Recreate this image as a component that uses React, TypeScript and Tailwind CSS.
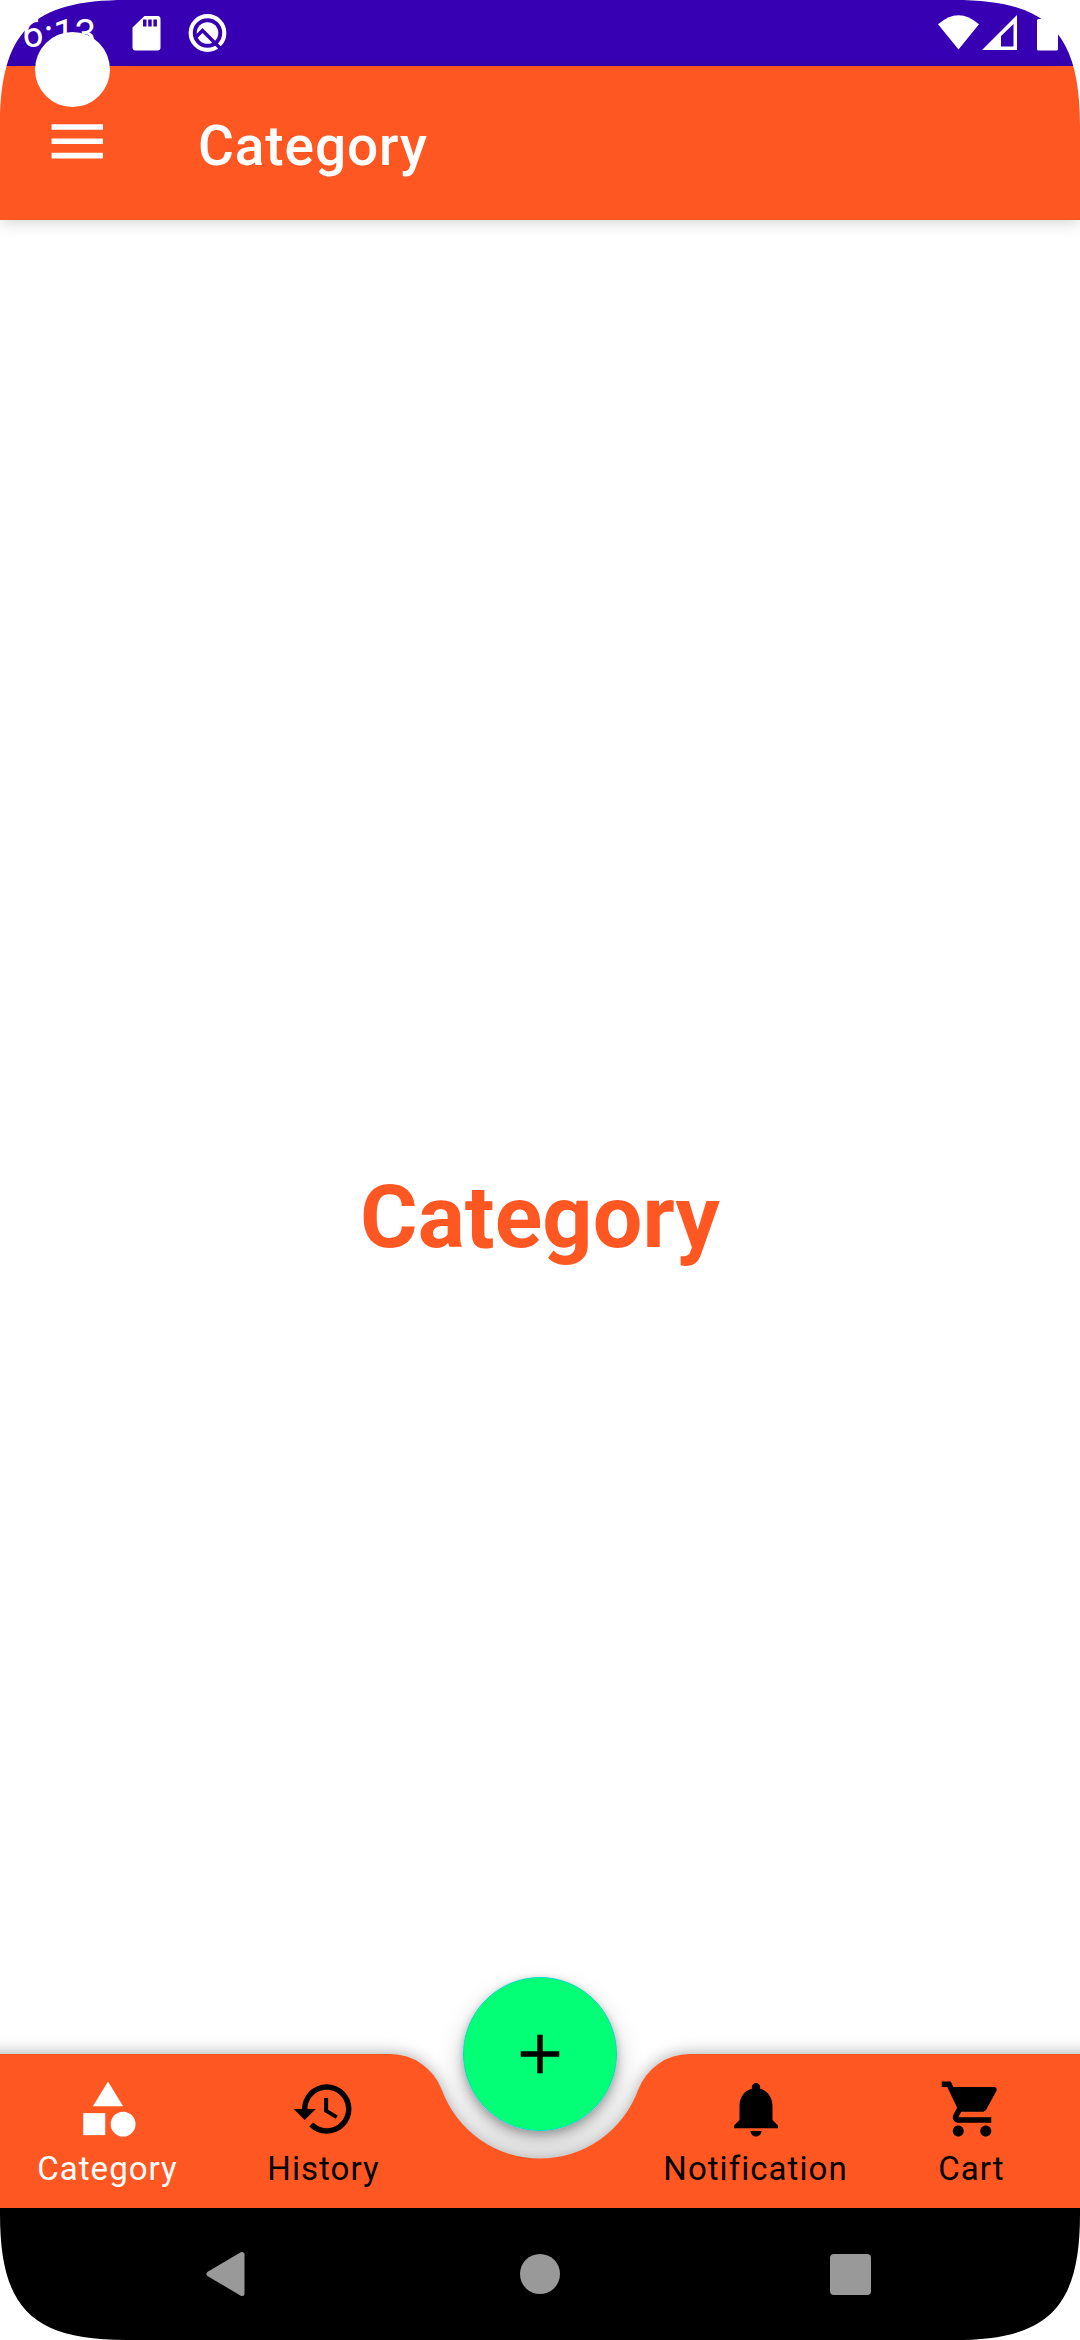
import { MdAdd, MdCategory, MdHistory, MdMenu, MdNotifications, MdShoppingCart } from "react-icons/md";
import type { IconType } from "react-icons";

function Tab({ icon: Icon, label, active }: { icon: IconType; label: string; active?: boolean }) {
  return (
    <button className={`flex flex-col items-center pt-[22px] ${active ? "text-white" : "text-black"}`}>
      <Icon className="size-[66px]" />
      <span className="-ml-[1px] mt-[7px] text-[33px] leading-[39px] tracking-[1.05px]">{label}</span>
    </button>
  );
}

function Corner({ place }: { place: string }) {
  return (
    <svg className={`pointer-events-none absolute size-[126px] ${place}`} viewBox="0 0 126 126">
      <path d="M0 0H126C32 0 0 32 0 126Z" fill="#fff" />
    </svg>
  );
}

function StatusBar() {
  return (
    <div className="flex h-[66px] shrink-0 items-start bg-[#3700b3] text-white">
      <span className="ml-[22px] mt-[11px] w-[104px] text-[38.5px] leading-[46px]">6:13</span>
      <svg className="h-[66px] w-[120px]" viewBox="126 0 120 66">
        <path d="M144.500 16H157.500A3 3 0 0 1 160.500 19V47.500A3 3 0 0 1 157.500 50.500H135.500A3 3 0 0 1 132.500 47.500V27.500Z" fill="#fff" />
        <path d="M143 19.500h3.500v7H143zM148.200 19.500h3.500v7h-3.500zM153.400 19.500h3.500v7h-3.500z" fill="#3700b3" />
        <circle cx="207.500" cy="33" r="16.800" fill="none" stroke="#fff" strokeWidth="4.200" />
        <circle cx="207.500" cy="33" r="10.800" fill="#fff" />
        <path d="M196 37L202.500 30.500L221 49" fill="none" stroke="#3700b3" strokeWidth="3.500" />
      </svg>
      <svg className="ml-auto h-[66px] w-[150px]" viewBox="930 0 150 66">
        <path d="M938 24.300Q958.500 6 979 24.300L958.500 49.500Z" fill="#fff" />
        <path d="M982 50L1017 15V50ZM1001 36V46.500H1013.500V24Z" fill="#fff" fillRule="evenodd" />
        <path d="M1043 15H1052V19H1056.500A1.500 1.500 0 0 1 1058 20.500V49A1.500 1.500 0 0 1 1056.500 50.500H1038.500A1.500 1.500 0 0 1 1037 49V20.500A1.500 1.500 0 0 1 1038.500 19H1043Z" fill="#fff" />
      </svg>
    </div>
  );
}

export default function App() {
  return (
    <div className="relative flex h-[2340px] w-[1080px] flex-col overflow-hidden bg-white font-['Roboto',sans-serif]">
      <StatusBar />
      <header className="relative flex h-[154px] shrink-0 items-center bg-[#ff5722] text-white shadow-[0_3px_14px_rgba(0,0,0,0.16)]">
        <MdMenu className="-mt-[3px] ml-[42.500px] size-[68.500px]" />
        <h1 className="ml-[87px] mt-[5px] text-[55px] font-medium leading-[64px] tracking-[0.9px]">Category</h1>
      </header>

      <main className="flex flex-1 items-center justify-center">
        <p className="mt-[159px] text-[88px] font-bold leading-[104px] tracking-[0.1px] text-[#ff5722]">Category</p>
      </main>

      <footer className="relative grid h-[154px] shrink-0 grid-cols-5">
        <span className="absolute -top-[77px] left-[463px] size-[154px] rounded-full shadow-[0_14px_26px_rgba(0,0,0,0.26),0_1px_7px_rgba(0,0,0,0.1)]" />
        <svg
          className="absolute inset-0 overflow-visible [filter:drop-shadow(0_0_8px_rgba(0,0,0,0.35))]"
          width="1080"
          height="154"
          viewBox="0 0 1080 154"
        >
          <path
            d="M-30 0H390.300A55 55 0 0 1 441.900 36A104.500 104.500 0 0 0 638.100 36A55 55 0 0 1 689.700 0H1110V154H-30Z"
            fill="#ff5722"
          />
        </svg>
        <div className="relative col-span-5 grid grid-cols-5 items-start">
          <Tab icon={MdCategory} label="Category" active />
          <Tab icon={MdHistory} label="History" />
          <button className="-mt-[77px] flex size-[154px] items-center justify-center justify-self-center rounded-full border border-[#03dac5] bg-[#03ff75] text-black shadow-[0_4px_10px_rgba(0,0,0,0.16)]">
            <MdAdd className="size-[66px]" />
          </button>
          <Tab icon={MdNotifications} label="Notification" />
          <Tab icon={MdShoppingCart} label="Cart" />
        </div>
      </footer>

      <nav className="relative flex h-[132px] shrink-0 items-center bg-black pl-[206px]">
        <svg className="h-[46px] w-[40px]" viewBox="0 0 40 46">
          <path d="M3 23L36 3.500V42.500Z" fill="#999" stroke="#999" strokeWidth="5" strokeLinejoin="round" />
        </svg>
        <span className="ml-[274px] size-[40px] rounded-full bg-[#999]" />
        <span className="ml-[270px] size-[41px] rounded-[4px] bg-[#999]" />
      </nav>

      <span className="absolute left-[35px] top-[32px] size-[75px] rounded-full bg-white" />
      <Corner place="left-0 top-0" />
      <Corner place="right-0 top-0 -scale-x-100" />
      <Corner place="bottom-0 left-0 -scale-y-100" />
      <Corner place="bottom-0 right-0 rotate-180" />
    </div>
  );
}
